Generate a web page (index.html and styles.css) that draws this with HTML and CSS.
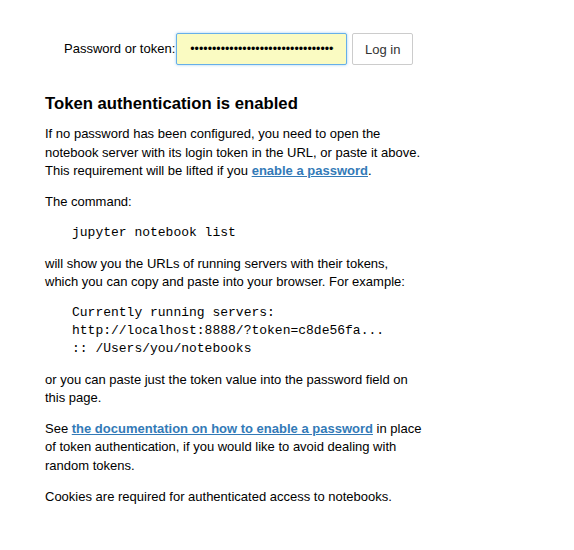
FILE: index.html
```html
<!DOCTYPE html>

<html lang="en-US">

<head>
	<meta charset="UTF-8" />
	<title>Jupyter Notebook - Login</title>
	<link rel="stylesheet" href="styles.css">
</head>

<body>
	<div class="page">
		<form class="login" onsubmit="return false">
			<label for="password_input">Password or token:</label>
			<input type="password" id="password_input" name="password"
				value="cccccccccccccccccccccccccccccccccc" />
			<button type="submit" class="btn">Log in</button>
		</form>

		<div class="message">
			<h3>Token authentication is enabled</h3>

			<p>If no password has been configured, you need to open the
			notebook server with its login token in the URL, or paste it above.
			This requirement will be lifted if you
			<a href="#">enable a password</a>.</p>

			<p>The command:</p>
			<pre>jupyter notebook list</pre>

			<p>will show you the URLs of running servers with their tokens,
			which you can copy and paste into your browser. For example:</p>
			<pre>Currently running servers:
http://localhost:8888/?token=c8de56fa...
:: /Users/you/notebooks</pre>

			<p>or you can paste just the token value into the password field on
			this page.</p>

			<p>See <a href="#">the documentation on how to enable a password</a>
			in place of token authentication, if you would like to avoid dealing
			with random tokens.</p>

			<p>Cookies are required for authenticated access to notebooks.</p>
		</div>
	</div>
</body>

</html>
```

FILE: styles.css
```css
body {
	margin: 0;
	font-family: "Liberation Sans", Arial, sans-serif;
	font-size: 13px;
	line-height: 1.42857;
	color: #000;
	background-color: #fff;
}

a {
	color: #337ab7;
	font-weight: bold;
	text-decoration: underline;
}

.page {
	width: 378px;
	padding: 33px 0 0 45px;
}

.login {
	display: flex;
	align-items: center;
	margin: 0 0 0 19px;
}

.login label {
	margin-right: 1px;
	white-space: nowrap;
}

.login input {
	box-sizing: border-box;
	flex: none;
	width: 171px;
	height: 32px;
	padding: 0 12px 0 13px;
	font-family: inherit;
	font-size: 12.4px;
	background-color: #fafbc2;
	border: 1px solid #66afe9;
	border-radius: 2px;
	outline: none;
	box-shadow: 0 0 3px rgba(102, 175, 233, 0.6);
}

.btn {
	box-sizing: border-box;
	flex: none;
	height: 32px;
	width: 61px;
	margin-left: 5px;
	padding: 0;
	font-family: inherit;
	font-size: 13px;
	color: #333;
	background-color: #fff;
	border: 1px solid #ccc;
	border-radius: 2px;
}

.message {
	margin-top: 30px;
}

h3 {
	font-size: 16.7px;
	font-weight: bold;
	line-height: 1.1;
	margin: 0 0 12px;
}

p {
	margin: 0 0 12px;
}

pre {
	font-family: "Liberation Mono", "Courier New", monospace;
	font-size: 13px;
	line-height: 18px;
	margin: 0 0 13px;
	padding-left: 27px;
}
```
